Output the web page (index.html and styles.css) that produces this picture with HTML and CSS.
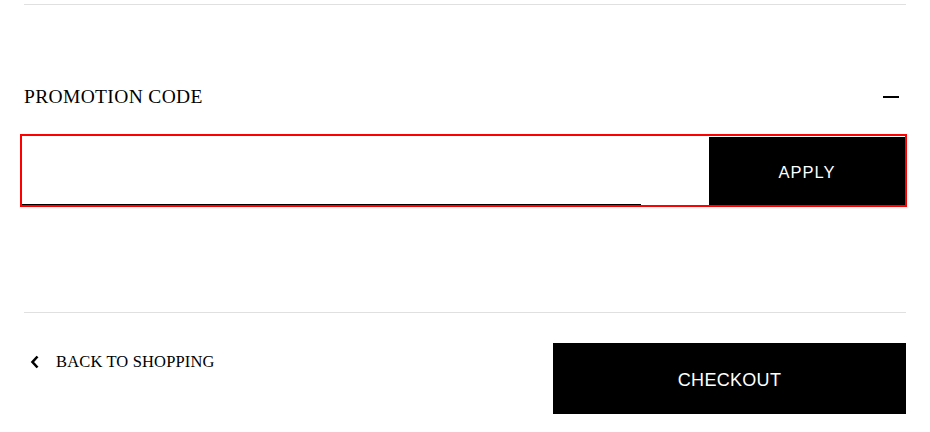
FILE: index.html
```html
<!DOCTYPE html>
<html lang="en">
<head>
<meta charset="utf-8">
<title>Cart</title>
<link rel="stylesheet" href="styles.css">
</head>
<body>
<div class="cart-bottom">
  <section class="promo">
    <div class="promo-head">
      <h2 class="promo-title">PROMOTION CODE</h2>
      <span class="promo-toggle" aria-hidden="true"></span>
    </div>
    <form class="promo-form" onsubmit="return false">
      <div class="promo-field">
        <input class="promo-input" type="text" aria-label="Promotion code">
      </div>
      <button class="btn-apply" type="submit">APPLY</button>
    </form>
  </section>
  <footer class="cart-actions">
    <a class="back-link" href="#">
      <svg class="back-icon" width="10" height="14" viewBox="0 0 10 14" aria-hidden="true">
        <polyline points="7.5,1.5 2.5,7 7.5,12.5" fill="none" stroke="#000" stroke-width="2.6"/>
      </svg>
      <span>BACK TO SHOPPING</span>
    </a>
    <button class="btn-checkout" type="button">CHECKOUT</button>
  </footer>
</div>
</body>
</html>
```
FILE: styles.css
```css
* {
  box-sizing: border-box;
}

html, body {
  margin: 0;
  padding: 0;
  background: #fff;
}

body {
  padding: 0 24px;
  color: #000;
  font-family: "Liberation Serif", "Times New Roman", serif;
}

.cart-bottom {
  width: 882px;
}

.promo {
  margin-top: 4px;
  border-top: 1px solid #e0e0e0;
  padding-top: 72px;
}

.promo-head {
  display: flex;
  align-items: center;
  justify-content: space-between;
  height: 40px;
}

.promo-title {
  margin: 0;
  font-weight: normal;
  font-size: 19.5px;
  letter-spacing: 0.35px;
}

.promo-toggle {
  width: 16px;
  height: 2px;
  background: #000;
  margin-right: 7px;
}

.promo-form {
  display: flex;
  height: 69px;
  margin: 19px 1px 107px -2px;
  outline: 2px solid #f00;
}

.promo-field {
  flex: 1;
  display: flex;
}

.promo-input {
  width: 619px;
  height: 69px;
  border: 0;
  border-bottom: 1px solid #000;
  padding: 0 16px;
  font: 16px "Liberation Sans", Arial, sans-serif;
  outline: none;
  background: transparent;
}

.btn-apply {
  width: 196px;
  height: 68px;
  margin-top: 1px;
  padding: 3px 0 0;
  border: 0;
  background: #000;
  color: #fff;
  font: 16.5px "Liberation Sans", Arial, sans-serif;
  letter-spacing: 1px;
  cursor: pointer;
}

.cart-actions {
  display: flex;
  justify-content: space-between;
  align-items: flex-start;
  border-top: 1px solid #e0e0e0;
  padding-top: 30px;
}

.back-link {
  display: flex;
  align-items: center;
  gap: 16px;
  margin-top: 7px;
  padding-left: 6px;
  line-height: 24px;
  color: #000;
  text-decoration: none;
  font-size: 16.5px;
  letter-spacing: 0.15px;
}

.back-icon {
  display: block;
}

.btn-checkout {
  width: 353px;
  height: 71px;
  padding: 3px 0 0;
  border: 0;
  background: #000;
  color: #fff;
  font: 18px "Liberation Sans", Arial, sans-serif;
  letter-spacing: 0.3px;
  cursor: pointer;
}
```
